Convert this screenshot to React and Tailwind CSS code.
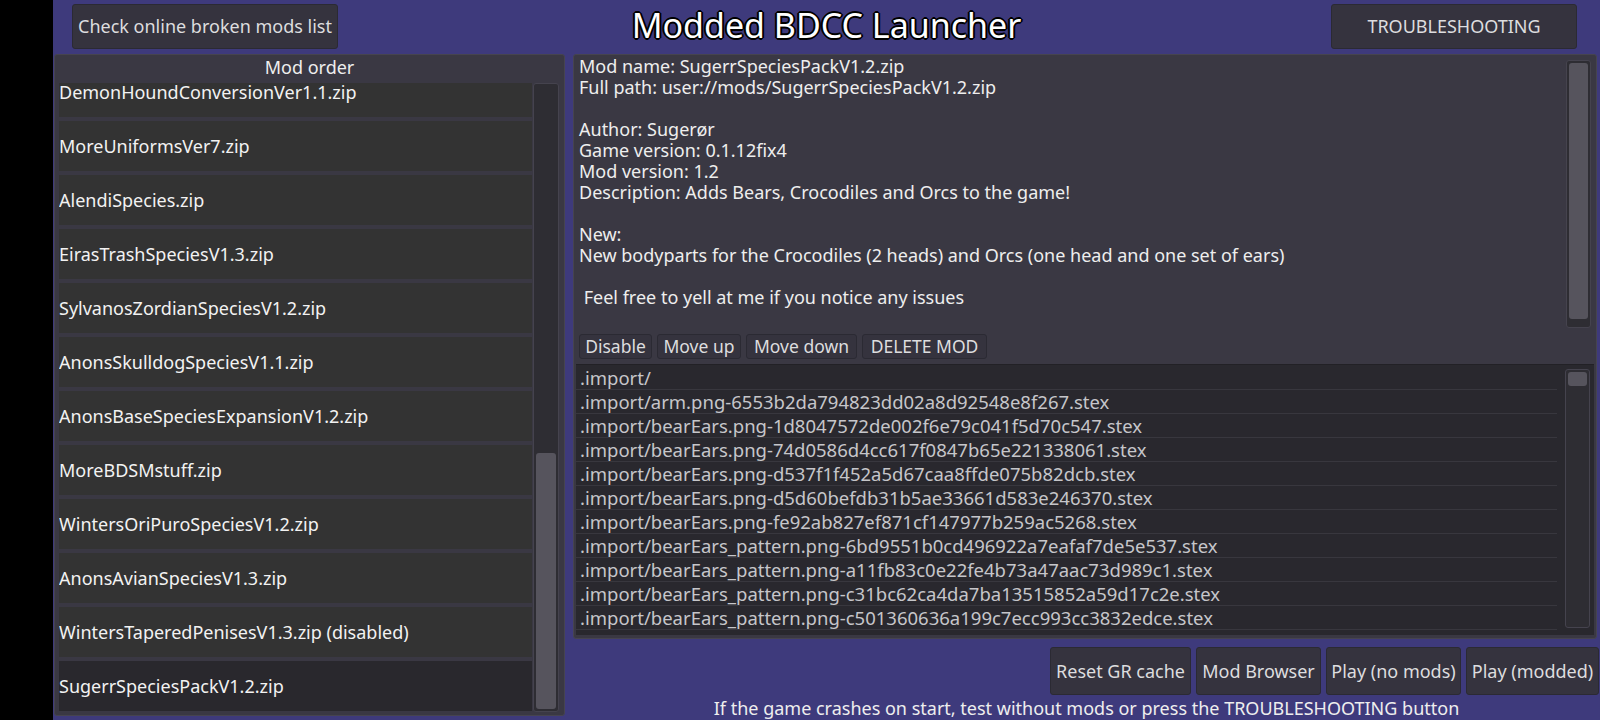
const mods = [
  "DemonHoundConversionVer1.1.zip",
  "MoreUniformsVer7.zip",
  "AlendiSpecies.zip",
  "EirasTrashSpeciesV1.3.zip",
  "SylvanosZordianSpeciesV1.2.zip",
  "AnonsSkulldogSpeciesV1.1.zip",
  "AnonsBaseSpeciesExpansionV1.2.zip",
  "MoreBDSMstuff.zip",
  "WintersOriPuroSpeciesV1.2.zip",
  "AnonsAvianSpeciesV1.3.zip",
  "WintersTaperedPenisesV1.3.zip (disabled)",
  "SugerrSpeciesPackV1.2.zip",
];

const files = [
  ".import/",
  ".import/arm.png-6553b2da794823dd02a8d92548e8f267.stex",
  ".import/bearEars.png-1d8047572de002f6e79c041f5d70c547.stex",
  ".import/bearEars.png-74d0586d4cc617f0847b65e221338061.stex",
  ".import/bearEars.png-d537f1f452a5d67caa8ffde075b82dcb.stex",
  ".import/bearEars.png-d5d60befdb31b5ae33661d583e246370.stex",
  ".import/bearEars.png-fe92ab827ef871cf147977b259ac5268.stex",
  ".import/bearEars_pattern.png-6bd9551b0cd496922a7eafaf7de5e537.stex",
  ".import/bearEars_pattern.png-a11fb83c0e22fe4b73a47aac73d989c1.stex",
  ".import/bearEars_pattern.png-c31bc62ca4da7ba13515852a59d17c2e.stex",
  ".import/bearEars_pattern.png-c501360636a199c7ecc993cc3832edce.stex",
  ".import/bearEars_pattern.png-d06f1a6d2a77e1c14ef6ad1f8d1d1031.stex",
];

const info = [
  "Mod name: SugerrSpeciesPackV1.2.zip",
  "Full path: user://mods/SugerrSpeciesPackV1.2.zip",
  "",
  "Author: Sugerør",
  "Game version: 0.1.12fix4",
  "Mod version: 1.2",
  "Description: Adds Bears, Crocodiles and Orcs to the game!",
  "",
  "New:",
  "New bodyparts for the Crocodiles (2 heads) and Orcs (one head and one set of ears)",
  "",
  " Feel free to yell at me if you notice any issues",
];

function Btn({ className = "", children }) {
  return (
    <button className={"flex items-center justify-center bg-[#35333e] border border-[#2b2a33] rounded-[3px] text-[#dddddf] whitespace-nowrap " + className}>
      {children}
    </button>
  );
}

function Scrollbar({ className = "", grab }) {
  return (
    <div className={"w-[25px] bg-[#2e2d33] border border-[#45434e] rounded-[3px] p-[2px] flex flex-col " + className}>
      {grab}
    </div>
  );
}

export default function App() {
  return (
    <div className="w-[1600px] h-[720px] flex bg-black overflow-hidden font-['Noto_Sans',sans-serif] text-[#eeeeee]">
      <div className="w-[53px] shrink-0" />
      <div className="flex-1 flex flex-col bg-[#3e3a7c]">
        {/* header */}
        <header className="h-[54px] shrink-0 grid grid-cols-[1fr_auto_1fr] items-start">
          <div className="pl-[19px] pt-[4px]">
            <Btn className="w-[266px] h-[45px] text-[18px]">Check online broken mods list</Btn>
          </div>
          <h1 className="text-[34px] leading-none pt-[8px] text-white [text-shadow:-2px_0_#000,2px_0_#000,0_-2px_#000,0_2px_#000,-1px_-1px_#000,1px_-1px_#000,-1px_1px_#000,1px_1px_#000]">
            Modded BDCC Launcher
          </h1>
          <div className="flex justify-end pr-[23px] pt-[4px]">
            <Btn className="w-[246px] h-[45px] text-[18px]">TROUBLESHOOTING</Btn>
          </div>
        </header>

        <div className="flex-1 flex gap-[8px] pl-[1px] min-h-0">
          {/* mod order */}
          <div className="w-[511px] h-[662px] shrink-0 flex flex-col bg-[#3a3843] border border-[#46444f] rounded-[3px]">
            <div className="h-[28px] flex items-center justify-center pb-[4px] text-[18px]">Mod order</div>
            <div className="flex-1 flex pl-[4px] pr-[5px] pb-[3px] gap-[1px] min-h-0">
              <div className="w-[473px] overflow-hidden">
                <div className="mt-[-16px] flex flex-col gap-[4px]">
                  {mods.map((m, i) => (
                    <div
                      key={m}
                      className={
                        "h-[50px] shrink-0 flex items-center text-[18px] text-[#f2f2f2] " +
                        (i === mods.length - 1 ? "bg-[#29282d]" : "bg-[#333333]")
                      }
                    >
                      {m}
                    </div>
                  ))}
                </div>
              </div>
              <Scrollbar
                className="w-[26px]"
                grab={
                  <>
                    <div className="h-[367px] shrink-0" />
                    <div className="flex-1 bg-[#56545d] rounded-[3px]" />
                  </>
                }
              />
            </div>
          </div>

          {/* right column */}
          <div className="flex-1 flex flex-col">
            <div className="h-[585px] mr-[3px] flex flex-col bg-[#3a3843] border border-[#46444f] rounded-[3px]">
              <div className="h-[274px] flex pl-[5px] pr-[5px]">
                <div className="flex-1 text-[18px] leading-[21px] pt-[1px] text-[#eeeeee]">
                  {info.map((l, i) => (
                    <div key={i} className="h-[21px] whitespace-pre">{l}</div>
                  ))}
                </div>
                <Scrollbar
                  className="mt-[5px] h-[268px]"
                  grab={<div className="flex-1 bg-[#56545d] rounded-[3px] mb-[6px]" />}
                />
              </div>
              <div className="flex gap-[5px] pl-[5px] mt-[5px] text-[17.5px]">
                <Btn className="w-[73px] h-[25px]">Disable</Btn>
                <Btn className="w-[84px] h-[25px]">Move up</Btn>
                <Btn className="w-[111px] h-[25px]">Move down</Btn>
                <Btn className="w-[125px] h-[25px]">DELETE MOD</Btn>
              </div>
              <div className="h-[271px] mt-[5px] mx-[2px] flex bg-[#29282e] border-t border-[#222126] pr-[4px]">
                <div className="flex-1 overflow-hidden pt-[1px]">
                  {files.map((f) => (
                    <div key={f} className="h-[24px] flex items-center pl-[4px] border-b border-[#38373e] text-[18.5px] text-[#c6c6ca] whitespace-nowrap">
                      {f}
                    </div>
                  ))}
                </div>
                <Scrollbar
                  className="ml-[8px] mt-[4px] mb-[7px]"
                  grab={<div className="h-[14px] bg-[#56545d] rounded-[3px]" />}
                />
              </div>
            </div>
            <div className="flex justify-end gap-[5px] pr-[1px] mt-[8px]">
              <Btn className="w-[141px] h-[48px] text-[18px]">Reset GR cache</Btn>
              <Btn className="w-[125px] h-[48px] text-[18px]">Mod Browser</Btn>
              <Btn className="w-[135px] h-[48px] text-[18px]">Play (no mods)</Btn>
              <Btn className="w-[133px] h-[48px] text-[18px]">Play (modded)</Btn>
            </div>
            <div className="text-center text-[18px] leading-[24px] mt-[1px] text-[#eeeeee] whitespace-nowrap">
              If the game crashes on start, test without mods or press the TROUBLESHOOTING button
            </div>
          </div>
        </div>
      </div>
    </div>
  );
}
